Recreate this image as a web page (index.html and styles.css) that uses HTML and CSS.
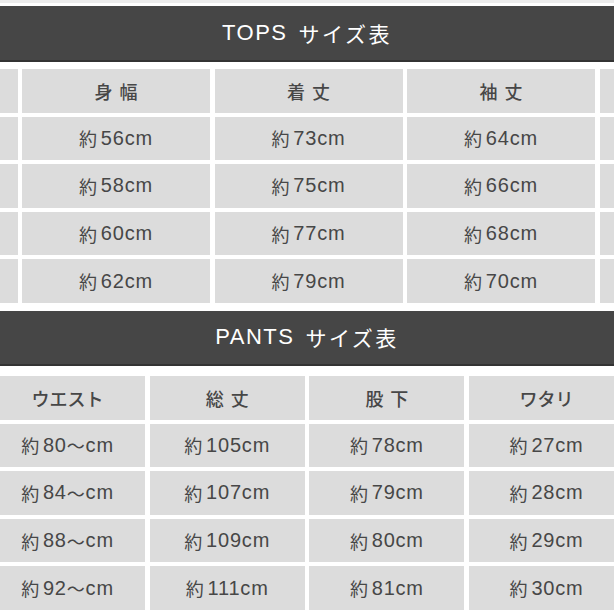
FILE: index.html
```html
<!DOCTYPE html>
<html lang="ja">
<head>
<meta charset="utf-8">
<title>サイズ表</title>
<link rel="stylesheet" href="styles.css">
</head>
<body>
<div class="page">
  <div class="bar bar-tops"><span class="en">TOPS</span><span class="ja">サイズ表</span></div>
  <div class="grid grid-tops">
    <div class="cell hd"></div><div class="cell hd"><span class="sp">身幅</span></div><div class="cell hd"><span class="sp">着丈</span></div><div class="cell hd"><span class="sp">袖丈</span></div><div class="cell hd"></div>
    <div class="cell"></div><div class="cell"><span class="ab">約</span>56cm</div><div class="cell"><span class="ab">約</span>73cm</div><div class="cell"><span class="ab">約</span>64cm</div><div class="cell"></div>
    <div class="cell"></div><div class="cell"><span class="ab">約</span>58cm</div><div class="cell"><span class="ab">約</span>75cm</div><div class="cell"><span class="ab">約</span>66cm</div><div class="cell"></div>
    <div class="cell"></div><div class="cell"><span class="ab">約</span>60cm</div><div class="cell"><span class="ab">約</span>77cm</div><div class="cell"><span class="ab">約</span>68cm</div><div class="cell"></div>
    <div class="cell"></div><div class="cell"><span class="ab">約</span>62cm</div><div class="cell"><span class="ab">約</span>79cm</div><div class="cell"><span class="ab">約</span>70cm</div><div class="cell"></div>
  </div>
  <div class="bar bar-pants"><span class="en">PANTS</span><span class="ja">サイズ表</span></div>
  <div class="grid grid-pants">
    <div class="cell hd">ウエスト</div><div class="cell hd"><span class="sp">総丈</span></div><div class="cell hd"><span class="sp">股下</span></div><div class="cell hd">ワタリ</div>
    <div class="cell"><span class="ab">約</span>80<span class="wave">〜</span>cm</div><div class="cell"><span class="ab">約</span>105cm</div><div class="cell"><span class="ab">約</span>78cm</div><div class="cell"><span class="ab">約</span>27cm</div>
    <div class="cell"><span class="ab">約</span>84<span class="wave">〜</span>cm</div><div class="cell"><span class="ab">約</span>107cm</div><div class="cell"><span class="ab">約</span>79cm</div><div class="cell"><span class="ab">約</span>28cm</div>
    <div class="cell"><span class="ab">約</span>88<span class="wave">〜</span>cm</div><div class="cell"><span class="ab">約</span>109cm</div><div class="cell"><span class="ab">約</span>80cm</div><div class="cell"><span class="ab">約</span>29cm</div>
    <div class="cell"><span class="ab">約</span>92<span class="wave">〜</span>cm</div><div class="cell"><span class="ab">約</span>111cm</div><div class="cell"><span class="ab">約</span>81cm</div><div class="cell"><span class="ab">約</span>30cm</div>
  </div>
</div>
</body>
</html>
```

FILE: styles.css
```css
html, body {
  margin: 0;
  padding: 0;
  background: #ffffff;
}
body {
  width: 614px;
  height: 614px;
  overflow: hidden;
  font-family: "Liberation Sans", "Noto Sans CJK JP", sans-serif;
  color: #474747;
}
.page {
  display: flex;
  flex-direction: column;
  border-top: 3px solid #ececec;
  padding-top: 3px;
  overflow: hidden;
}
.bar {
  background: #464646;
  border-bottom: 2px solid #333333;
  color: #ffffff;
  display: flex;
  justify-content: center;
  align-items: center;
  gap: 11px;
  font-size: 22px;
  letter-spacing: 1.5px;
  box-sizing: border-box;
}
.bar .ja {
  font-family: "Noto Sans CJK JP", sans-serif;
  font-size: 21px;
  letter-spacing: 2.5px;
}
.bar-tops {
  height: 56px;
}
.bar-pants {
  height: 55px;
  margin-top: 8px;
}
.grid {
  display: grid;
  grid-auto-rows: 43.6px;
  row-gap: 4px;
  margin-top: 7px;
}
.grid-tops {
  grid-template-columns: repeat(5, 188px);
  column-gap: 4.5px;
  margin-left: -170.5px;
}
.grid-pants {
  grid-template-columns: repeat(4, 155px);
  column-gap: 4.7px;
  margin-left: -10px;
  margin-top: 10px;
}
.cell {
  background: #dcdcdc;
  display: flex;
  justify-content: center;
  align-items: center;
  font-size: 20px;
  letter-spacing: 0.8px;
  white-space: nowrap;
}
.cell.hd {
  font-family: "Noto Sans CJK JP", sans-serif;
  font-size: 18px;
  font-weight: 500;
  letter-spacing: 0;
}
.sp {
  letter-spacing: 7px;
  margin-right: -7px;
}
.ab {
  font-family: "Noto Sans CJK JP", sans-serif;
  font-size: 18px;
  margin-right: 3px;
  vertical-align: 1px;
}
.wave {
  font-family: "Noto Sans CJK JP", sans-serif;
  font-size: 18px;
}
```
